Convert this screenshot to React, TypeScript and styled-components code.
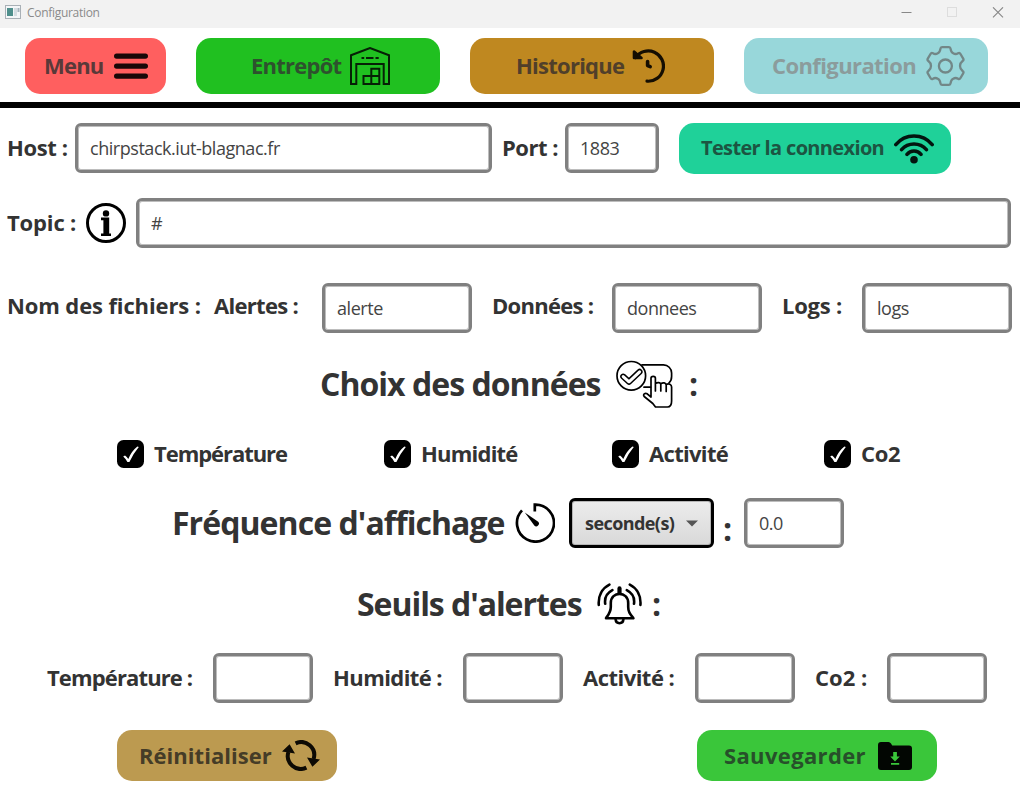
import React from "react";
import styled, { createGlobalStyle } from "styled-components";

const GlobalStyle = createGlobalStyle`
  * { box-sizing: border-box; }
  body { margin: 0; background: #fff; overflow: hidden; }
  svg { display: block; flex: none; }
`;

const Window = styled.div`
  width: 1020px;
  height: 793px;
  background: #fff;
  color: #333;
  font-family: "Open Sans", "Noto Sans", sans-serif;
  display: flex;
  flex-direction: column;
`;

const TitleBar = styled.header`
  height: 28px;
  flex: none;
  background: #f2f2f2;
  display: flex;
  align-items: flex-start;
  padding: 5px 16px 0 5px;
`;

const Caption = styled.span`
  font-size: 12px;
  line-height: 16px;
  color: #8a8a8a;
  margin-left: 6px;
  letter-spacing: -0.3px;
  flex: 1;
`;

const WindowControls = styled.div`
  display: flex;
  gap: 34px;
  padding-top: 2px;
`;

const Nav = styled.nav`
  height: 80px;
  flex: none;
  border-bottom: 6px solid #000;
  padding: 10px 25px 0;
  display: flex;
  gap: 30px;
`;

const Button = styled.button<{ $w: number; $bg: string; $fg: string; $h?: number; $pl: number }>`
  width: ${(p) => p.$w}px;
  height: ${(p) => p.$h ?? 51}px;
  flex: none;
  border: 0;
  border-radius: 15px;
  background: ${(p) => p.$bg};
  color: ${(p) => p.$fg};
  font-family: inherit;
  padding: 0 0 0 ${(p) => p.$pl}px;
  display: flex;
  align-items: center;
`;

const TestButton = styled(Button)`
  margin-bottom: -1px;
`;

const Text = styled.span<{ $w: number; $ls?: number; $size?: number; $up?: number; $down?: number }>`
  width: ${(p) => p.$w}px;
  flex: none;
  text-align: left;
  white-space: nowrap;
  font-weight: 700;
  font-size: ${(p) => p.$size ?? 22}px;
  line-height: 30px;
  letter-spacing: ${(p) => p.$ls ?? 0}px;
  padding-bottom: ${(p) => p.$up ?? (p.$size ? 0 : 2)}px;
  padding-top: ${(p) => p.$down ?? 0}px;
`;

const Main = styled.main`
  flex: 1;
  display: flex;
  flex-direction: column;
`;

const Row = styled.div<{ $top: number; $left: number; $h?: number }>`
  height: ${(p) => p.$h ?? 50}px;
  flex: none;
  margin-top: ${(p) => p.$top}px;
  padding-left: ${(p) => p.$left}px;
  display: flex;
  align-items: center;
`;

const Input = styled.input<{ $w: number }>`
  width: ${(p) => p.$w}px;
  height: 50px;
  flex: none;
  border: 3px solid #808080;
  border-radius: 6px;
  box-shadow: inset 0 0 0 1px #bdbdbd;
  background: #fff;
  color: #444;
  font-family: "Open Sans", "Noto Sans", sans-serif;
  font-size: 18px;
  letter-spacing: -0.46px;
  padding: 0 12px 1px;
  outline: none;
`;

const Select = styled.div`
  width: 145px;
  height: 50px;
  flex: none;
  border: 3px solid #000;
  border-radius: 6px;
  box-shadow: inset 0 0 0 1px #b5b5b5;
  background: linear-gradient(#ececec, #d9d9d9);
  display: flex;
  align-items: center;
  padding-left: 13px;
`;

const Spacer = styled.span<{ $w: number }>`
  width: ${(p) => p.$w}px;
  flex: none;
`;

const Check = styled.label<{ $w: number }>`
  width: ${(p) => p.$w}px;
  flex: none;
  display: flex;
  align-items: center;
  gap: 10px;
`;

const AppIcon = () => (
  <svg width="16" height="14" viewBox="0 0 16 14">
    <rect x="0.5" y="0.5" width="15" height="13" fill="#f4f6f8" stroke="#a9b0b6" />
    <rect x="2" y="3" width="6" height="8" fill="#4f8f8c" />
    <rect x="9" y="3" width="3" height="8" fill="#d5dde2" />
    <rect x="12.5" y="3" width="2" height="4" fill="#a5b4bd" />
  </svg>
);

const MenuIcon = () => (
  <svg width="34" height="28" viewBox="0 0 34 28">
    <g stroke="#180808" strokeWidth="5.2" strokeLinecap="round">
      <path d="M2.6 4.1H31.4M2.6 14.1H31.4M2.6 24.1H31.4" />
    </g>
  </svg>
);

const WarehouseIcon = () => (
  <svg width="40" height="38" viewBox="0 0 40 38" fill="none" stroke="#062006" strokeWidth="2">
    <path d="M1 8.3L20 1L39 8.3V37H33.7V17H6.3V37H1Z" />
    <path d="M11.5 11H14.2M16 11H23.5M25.5 11H28.7" />
    <path d="M21.3 29V21.8H29.3V37H13.5V29H29.3M21.3 29V37" />
  </svg>
);

const HistoryIcon = () => (
  <svg width="33" height="34" viewBox="0 0 33 34" fill="none" stroke="#150e02" strokeLinecap="round" strokeLinejoin="round">
    <path d="M3.6 8.6A15.2 15.2 0 1 1 15 32.2" strokeWidth="3.2" />
    <path d="M2 2.6V9H9.5Z" fill="#150e02" strokeWidth="2.6" />
    <path d="M15.6 12.5V16.6L18.2 17.6" strokeWidth="3.6" />
  </svg>
);

const GearIcon = () => (
  <svg width="39" height="40" viewBox="0 0 39 40" fill="none" stroke="#728787" strokeWidth="2.3" strokeLinejoin="round">
    <path d="M16 1.2H23Q24.4 1.2 24.6 2.8Q25 6.2 27.2 7.2Q29.6 8.7 32 7.3Q33.6 6.4 34.5 8L37.2 12.6Q38 14 36.6 15Q34 17 34 20Q34 23 36.6 25Q38 26 37.2 27.4L34.5 32Q33.6 33.6 32 32.7Q29.6 31.3 27.2 32.8Q25 33.8 24.6 37.2Q24.4 38.8 23 38.8H16Q14.6 38.8 14.4 37.2Q14 33.8 11.8 32.8Q9.4 31.3 7 32.7Q5.4 33.6 4.5 32L1.8 27.4Q1 26 2.4 25Q5 23 5 20Q5 17 2.4 15Q1 14 1.8 12.6L4.5 8Q5.4 6.4 7 7.3Q9.4 8.7 11.8 7.2Q14 6.2 14.4 2.8Q14.6 1.2 16 1.2Z" />
    <circle cx="19.4" cy="20" r="6.5" />
  </svg>
);

const WifiIcon = () => (
  <svg width="40" height="30" viewBox="0 0 40 30" fill="none" stroke="#03150f" strokeWidth="3.5" strokeLinecap="round">
    <path d="M1.8 10.6A23.5 23.5 0 0 1 38.2 10.6M7.6 15.6A16.3 16.3 0 0 1 32.4 15.6M13 20.4A9 9 0 0 1 27 20.4" />
    <circle cx="20" cy="25.8" r="3.8" fill="#03150f" stroke="none" />
  </svg>
);

const InfoIcon = () => (
  <svg width="40" height="40" viewBox="0 0 40 40">
    <circle cx="20" cy="20" r="18.5" fill="none" stroke="#000" strokeWidth="3" />
    <circle cx="20" cy="10.4" r="3.2" />
    <path d="M15 14.6H23.2V30.4H25V33H15V30.4H17.4V17.3H15Z" />
  </svg>
);

const ChoiceIcon = () => (
  <svg width="57" height="48" viewBox="0 -1 57 48" fill="none" stroke="#000" strokeWidth="1.7" strokeLinejoin="round" strokeLinecap="round">
    <path d="M26 3.8H47.5A8.3 8.3 0 0 1 55.6 12V15.5C55.6 18.5 54.8 20.3 53 21.8M28 26.2H34.5" />
    <circle cx="15.3" cy="14.8" r="14.3" fill="#fff" />
    <path d="M7.2 15.6L13 20.8L23.6 10.8" strokeWidth="6" />
    <path d="M7.2 15.6L13 20.8L23.6 10.8" stroke="#fff" strokeWidth="3" />
    <path d="M35 36V17.3C35 14.6 39.4 14.6 39.4 17.3V30M39.4 22.5C41.5 21 44.6 21.3 44.8 23.3V30M44.8 22.8C47 21.2 50 21.8 50.2 23.8V30.5M50.2 23.4C52.8 22.2 55.6 23.4 55.6 26V40C55.6 44 54.4 46 51.5 46H39.5L36.8 42.5L28.2 35.5C26.4 33.4 29.2 31.6 31.2 32.8L35 36" />
  </svg>
);

const TimerIcon = () => (
  <svg width="40" height="40" viewBox="0 0 40 40" fill="none" stroke="#000">
    <path d="M19.8 8.6V1.6A18.5 18.5 0 1 1 7 7.4" strokeWidth="2.7" />
    <path d="M9.8 9.6L23.2 18.8A2.4 2.4 0 0 1 19.3 22.4Z" fill="#000" stroke="none" />
  </svg>
);

const BellIcon = () => (
  <svg width="46" height="42" viewBox="0 0 46 42" fill="none" stroke="#000" strokeWidth="2.6" strokeLinecap="round" strokeLinejoin="round">
    <path d="M9 35.2C12 31 13.8 29 13.8 24V20C13.8 7.8 31.2 7.8 31.2 20V24C31.2 29 33 31 36.4 35.2Z" />
    <path d="M22.5 5.4V9.5" strokeWidth="4.2" />
    <path d="M18.6 36.5C19 41.4 26 41.4 26.4 36.5" />
    <path d="M12.4 1.6C5 5.4 1 13 1.8 22M15.4 7.2C10 10 7.4 15 8.2 20.8M32.8 1.6C40.2 5.4 44.2 13 43.4 22M29.8 7.2C35.2 10 37.8 15 37 20.8" />
  </svg>
);

const ResetIcon = () => (
  <svg width="38" height="31" viewBox="0 0 38 31" fill="none" stroke="#0d0a04" strokeWidth="4">
    <path d="M13.6 3.4A13 13 0 0 1 31.6 19M24.4 27.6A13 13 0 0 1 6.4 12" />
    <path d="M25 17.4L38 19.6L30.4 26.8ZM13 13.6L0 11.4L7.6 4.2Z" fill="#0d0a04" stroke="none" />
  </svg>
);

const SaveIcon = () => (
  <svg width="34" height="28" viewBox="0 0 34 28">
    <path d="M3 0H10.5Q12 0 13 1.5L14.2 3.5H31Q34 3.5 34 6.5V25Q34 28 31 28H3Q0 28 0 25V3Q0 0 3 0Z" fill="#020602" />
    <path d="M15.2 10H18.9V14.4H21.8L17 19.4L12.3 14.4H15.2ZM13 21H21.2V22.8H13Z" fill="#3ac63a" />
  </svg>
);

const CheckMark = () => (
  <svg width="27" height="28" viewBox="0 0 27 28">
    <rect width="27" height="28" rx="6.5" />
    <path d="M6.2 16.4L8 15.4Q9.8 16.8 11.3 19.1Q14.5 11.2 20.4 6.6L21.8 7Q16.4 13.4 12.4 22H10.4Q8.8 18.6 6.2 16.4Z" fill="#fff" />
  </svg>
);

export default function App() {
  return (
    <>
      <GlobalStyle />
      <Window>
        <TitleBar>
          <AppIcon />
          <Caption>Configuration</Caption>
          <WindowControls>
            <svg width="12" height="12" viewBox="0 0 12 12"><path d="M1.5 5.5H11.5" stroke="#888" /></svg>
            <svg width="12" height="12" viewBox="0 0 12 12"><rect x="1.5" y="0.5" width="9" height="9" fill="none" stroke="#ddd" /></svg>
            <svg width="12" height="12" viewBox="0 0 12 12"><path d="M1 0.3L11 10.3M11 0.3L1 10.3" stroke="#888" strokeWidth="1.1" /></svg>
          </WindowControls>
        </TitleBar>
        <Nav>
          <Button $w={141} $h={56} $bg="#ff5f5f" $fg="#5a3939" $pl={19}>
            <Text $w={70} $ls={-0.8}>Menu</Text>
            <MenuIcon />
          </Button>
          <Button $w={244} $h={56} $bg="#20c020" $fg="#2e512e" $pl={55}>
            <Text $w={99} $ls={-0.75}>Entrepôt</Text>
            <WarehouseIcon />
          </Button>
          <Button $w={244} $h={56} $bg="#bf8820" $fg="#503f2a" $pl={46}>
            <Text $w={116} $ls={-0.75}>Historique</Text>
            <HistoryIcon />
          </Button>
          <Button $w={244} $h={56} $bg="#98d7da" $fg="#8b9c9c" $pl={28}>
            <Text $w={154} $ls={-0.6}>Configuration</Text>
            <GearIcon />
          </Button>
        </Nav>
        <Main>
          <Row $top={15} $left={7}>
            <Text $w={68} $ls={-0.4}>Host :</Text>
            <Input $w={417} defaultValue="chirpstack.iut-blagnac.fr" />
            <Spacer $w={10} />
            <Text $w={63} $ls={-0.5}>Port :</Text>
            <Input $w={94} defaultValue="1883" />
            <Spacer $w={20} />
            <TestButton $w={272} $bg="#1fd199" $fg="#1c5542" $pl={22}>
              <Text $w={193} $size={20} $ls={-0.65} $up={1}>Tester la connexion</Text>
              <WifiIcon />
            </TestButton>
          </Row>
          <Row $top={25} $left={7}>
            <Text $w={79} $ls={-0.15}>Topic :</Text>
            <InfoIcon />
            <Spacer $w={10} />
            <Input $w={875} defaultValue="#" />
          </Row>
          <Row $top={35} $left={7}>
            <Text $w={207} $ls={-0.12} $up={6}>Nom des fichiers :</Text>
            <Text $w={108} $ls={-0.7} $up={6}>Alertes :</Text>
            <Input $w={150} defaultValue="alerte" />
            <Spacer $w={20} />
            <Text $w={120} $ls={-0.7} $up={6}>Données :</Text>
            <Input $w={150} defaultValue="donnees" />
            <Spacer $w={20} />
            <Text $w={80} $ls={-0.25} $up={6}>Logs :</Text>
            <Input $w={150} defaultValue="logs" />
          </Row>
          <Row $top={26} $left={320}>
            <Text $w={296} $size={32} $ls={-0.97}>Choix des données</Text>
            <ChoiceIcon />
            <Spacer $w={16} />
            <Text $w={12} $size={32}>:</Text>
          </Row>
          <Row $top={31} $left={117} $h={28}>
            <Check $w={267}><CheckMark /><Text $w={140} $ls={-1.05}>Température</Text></Check>
            <Check $w={228}><CheckMark /><Text $w={110} $ls={-0.78}>Humidité</Text></Check>
            <Check $w={212}><CheckMark /><Text $w={90} $ls={-0.68}>Activité</Text></Check>
            <Check $w={100}><CheckMark /><Text $w={50} $ls={-0.3}>Co2</Text></Check>
          </Row>
          <Row $top={30} $left={172}>
            <Text $w={343} $size={32} $ls={-0.94}>Fréquence d'affichage</Text>
            <TimerIcon />
            <Spacer $w={14} />
            <Select>
              <Text $w={101} $size={18} $ls={-0.57}>seconde(s)</Text>
              <svg width="12" height="7" viewBox="0 0 12 7"><path d="M0 0.5H12L6 6.5Z" fill="#555" /></svg>
            </Select>
            <Spacer $w={9} />
            <Text $w={21} $size={32} $down={11}>:</Text>
            <Input $w={100} defaultValue="0.0" />
          </Row>
          <Row $top={31} $left={357}>
            <Text $w={240} $size={32} $ls={-1.05}>Seuils d'alertes</Text>
            <BellIcon />
            <Spacer $w={9} />
            <Text $w={12} $size={32}>:</Text>
          </Row>
          <Row $top={24} $left={47}>
            <Text $w={166} $ls={-0.87}>Température :</Text>
            <Input $w={100} />
            <Spacer $w={20} />
            <Text $w={130} $ls={-0.58}>Humidité :</Text>
            <Input $w={100} />
            <Spacer $w={20} />
            <Text $w={112} $ls={-0.52}>Activité :</Text>
            <Input $w={100} />
            <Spacer $w={20} />
            <Text $w={72}>Co2 :</Text>
            <Input $w={100} />
          </Row>
          <Row $top={27} $left={117} $h={51}>
            <Button $w={220} $bg="#bc9a50" $fg="#453c27" $pl={22}>
              <Text $w={143} $ls={0.04}>Réinitialiser</Text>
              <ResetIcon />
            </Button>
            <Spacer $w={360} />
            <Button $w={240} $bg="#3ac63a" $fg="#27502a" $pl={27}>
              <Text $w={154} $ls={0.35}>Sauvegarder</Text>
              <SaveIcon />
            </Button>
          </Row>
        </Main>
      </Window>
    </>
  );
}
